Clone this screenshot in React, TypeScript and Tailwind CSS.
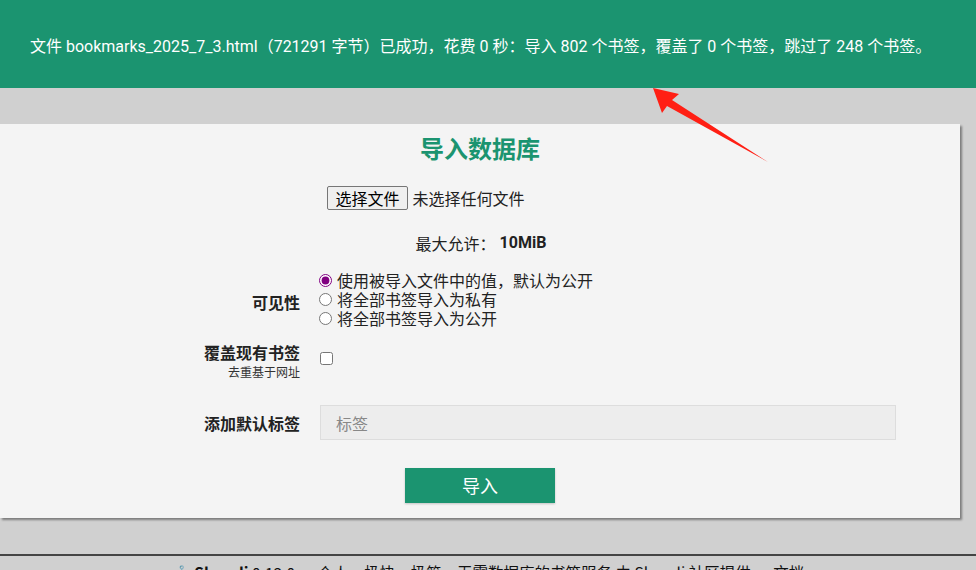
import { useState } from "react";

const cjk = "font-['Noto_Sans_CJK_SC',sans-serif]";

function Arrow() {
  return (
    <svg
      className="pointer-events-none absolute left-0 top-0"
      width="976"
      height="570"
      viewBox="0 0 976 570"
      aria-hidden
    >
      <path d="M653 88 L679 94 L672 100 L768 162 L667 106 L662 113 Z" fill="#ff1f14" />
    </svg>
  );
}

export default function App() {
  const [visibility, setVisibility] = useState("default");

  return (
    <div className={`relative h-[570px] w-[976px] overflow-hidden bg-[#d0d0d0] ${cjk}`}>
      {/* success banner */}
      <div className="flex h-[88px] items-center bg-[#1b9470] pl-[30px] pt-[6px] font-['Roboto','Noto_Sans_CJK_SC',sans-serif] text-[16px] text-white">
        文件 bookmarks_2025_7_3.html（721291 字节）已成功，花费 0 秒：导入 802 个书签，覆盖了 0 个书签，跳过了 248 个书签。
      </div>

      <div className="mt-[36px] w-[960px] bg-[#f4f4f4] pb-[15px] pt-[6px] shadow-[2px_2px_2px_rgba(0,0,0,0.4)]">
        <h2 className="text-center text-[24px] font-bold leading-[36px] text-[#1b9470]">导入数据库</h2>

        <div className="mt-[20px] flex items-center justify-center pr-[108px] text-[16px] text-[#222]">
          <button className="h-[24px] rounded-[2px] border border-[#767676] bg-[#efefef] px-[7px] text-[16px] leading-[20px] text-black">
            选择文件
          </button>
          <span className="ml-[5px]">未选择任何文件</span>
        </div>

        <div className="mt-[21px] flex items-center justify-center pl-[2px] text-[16px] leading-[24px] text-[#222]">
          <span>最大允许：</span>
          <span className="ml-[4px] font-['Roboto',sans-serif] font-bold">10MiB</span>
        </div>

        {/* visibility */}
        <div className="mt-[16px] flex items-center">
          <div className="w-[300px] pt-[4px] text-right text-[16px] font-bold text-[#222]">可见性</div>
          <div className="ml-[19px] flex flex-col text-[16px] leading-[19px] text-[#222]">
            {[
              ["default", "使用被导入文件中的值，默认为公开"],
              ["private", "将全部书签导入为私有"],
              ["public", "将全部书签导入为公开"],
            ].map(([v, label]) => (
              <label key={v} className="flex items-center">
                <input
                  type="radio"
                  name="privacy"
                  checked={visibility === v}
                  onChange={() => setVisibility(v)}
                  className="m-0 mr-[5px] h-[13px] w-[13px] accent-[#800080]"
                />
                {label}
              </label>
            ))}
          </div>
        </div>

        {/* overwrite */}
        <div className="mt-[12px] flex items-center">
          <div className="w-[300px] text-right">
            <div className="text-[16px] font-bold leading-[24px] text-[#222]">覆盖现有书签</div>
            <div className="text-[12px] leading-[16px] text-[#333]">去重基于网址</div>
          </div>
          <input type="checkbox" className="m-0 ml-[20px] mb-[3px] h-[13px] w-[13px]" />
        </div>

        {/* default tags */}
        <div className="mt-[25px] flex items-center">
          <div className="w-[300px] text-right text-[16px] font-bold text-[#222]">添加默认标签</div>
          <input
            placeholder="标签"
            className="ml-[20px] h-[35px] w-[576px] border border-[#ddd] bg-[#ededed] px-[15px] text-[16px] outline-none placeholder:text-[#888]"
          />
        </div>

        <div className="mt-[28px] flex justify-center">
          <button className="h-[35px] w-[150px] bg-[#1b9470] text-[18px] text-white shadow-[0_1px_2px_rgba(0,0,0,0.2)]">
            导入
          </button>
        </div>
      </div>

      {/* footer */}
      <div className="mt-[36px] border-t-2 border-[#444] pt-[6px] text-center text-[15.5px] leading-[20px] text-[#111]">
        ⚓ <b>Shaarli</b> 0.13.0 · 个人、极快、极简、无需数据库的书签服务 由 Shaarli 社区提供 · 文档
      </div>

      <Arrow />
    </div>
  );
}
